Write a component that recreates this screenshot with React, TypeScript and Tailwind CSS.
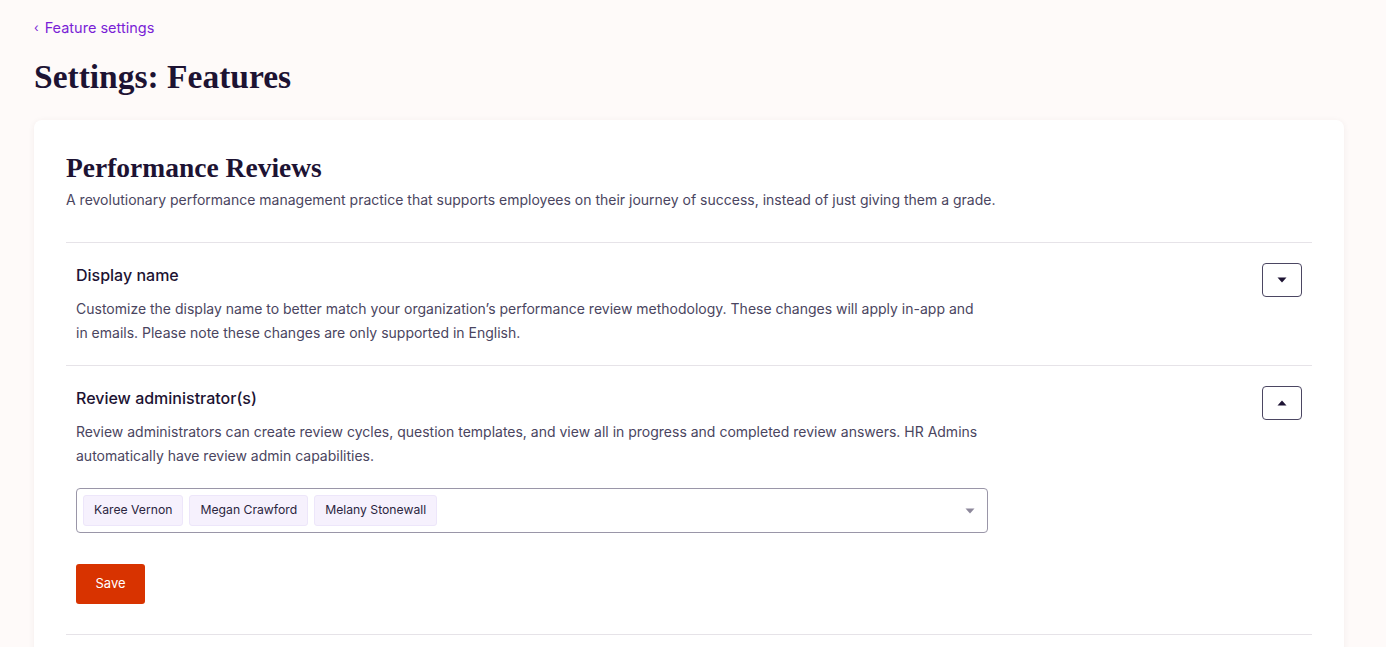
import { useState } from "react";

const serif = { fontFamily: '"Liberation Serif", "DejaVu Serif", serif' };

function ToggleButton({ open, onClick }: { open: boolean; onClick: () => void }) {
  return (
    <button
      onClick={onClick}
      className="flex h-[34px] w-[40px] shrink-0 items-center justify-center rounded-[4px] border border-[#4b4662] bg-white"
    >
      <svg width="10" height="6" viewBox="0 0 10 6" className={open ? "rotate-180" : ""}>
        <path d="M0.5 0.5 L9.5 0.5 L5 5.5 Z" fill="#1d1333" />
      </svg>
    </button>
  );
}

function Chip({ label }: { label: string }) {
  return (
    <span className="flex h-[31px] items-center rounded-[3px] border border-[#ede6fa] bg-[#f6f1fd] px-[10px] text-[12.2px] text-[#2b2540]">
      {label}
    </span>
  );
}

export default function App() {
  const [nameOpen, setNameOpen] = useState(false);
  const [adminOpen, setAdminOpen] = useState(true);

  return (
    <div
      className="min-h-screen bg-[#fefaf9] pl-[34px] pr-[42px] pt-[18px] text-[#1d1333]"
      style={{ fontFamily: 'Inter, "Noto Sans", sans-serif' }}
    >
      <a href="#" className="flex items-center gap-[6px] leading-[20px] text-[#7a1fd6]">
        <span className="text-[12px]">&lsaquo;</span>
        <span className="text-[14.5px]">Feature settings</span>
      </a>

      <h1 className="mt-[19px] text-[33.5px] font-bold leading-[40px] text-[#1d1333]" style={serif}>
        Settings: Features
      </h1>

      <div className="mt-[23px] rounded-[8px] bg-white px-[32px] pt-[31px] shadow-[0_1px_6px_rgba(60,30,30,0.06)]">
        <h2 className="text-[27.5px] font-bold leading-[34px] text-[#1d1333]" style={serif}>
          Performance Reviews
        </h2>
        <p className="mt-[4px] text-[14px] leading-[22px] text-[#4a4560]">
          A revolutionary performance management practice that supports employees on their journey of success, instead of just giving them a grade.
        </p>

        <div className="mt-[31px] border-t border-[#e6e3e8]">
          <section className="flex items-start justify-between px-[10px] pb-[20px] pt-[20px]">
            <div className="max-w-[912px]">
              <h3 className="text-[16px] font-medium leading-[24px] text-[#1d1333]">Display name</h3>
              <p className="mt-[10px] text-[14px] leading-[24px] text-[#4a4560]">
                Customize the display name to better match your organization’s performance review methodology. These changes will apply in-app and in emails. Please note these changes are only supported in English.
              </p>
            </div>
            <ToggleButton open={nameOpen} onClick={() => setNameOpen(!nameOpen)} />
          </section>
        </div>

        <div className="border-t border-[#e6e3e8]">
          <section className="px-[10px] pb-[30px] pt-[20px]">
            <div className="flex items-start justify-between">
              <div className="max-w-[912px]">
                <h3 className="text-[16px] font-medium leading-[24px] text-[#1d1333]">Review administrator(s)</h3>
                <p className="mt-[10px] text-[14px] leading-[24px] text-[#4a4560]">
                  Review administrators can create review cycles, question templates, and view all in progress and completed review answers. HR Admins automatically have review admin capabilities.
                </p>
              </div>
              <ToggleButton open={adminOpen} onClick={() => setAdminOpen(!adminOpen)} />
            </div>

            {adminOpen && (
              <>
                <div className="mt-[20px] flex h-[45px] w-[912px] items-center justify-between rounded-[4px] border border-[#9a96a8] pl-[6px] pr-[12px]">
                  <div className="flex gap-[6px]">
                    <Chip label="Karee Vernon" />
                    <Chip label="Megan Crawford" />
                    <Chip label="Melany Stonewall" />
                  </div>
                  <svg width="10" height="6" viewBox="0 0 10 6">
                    <path d="M0.5 0.5 L9.5 0.5 L5 5.5 Z" fill="#8d889b" />
                  </svg>
                </div>

                <button className="mt-[31px] h-[40px] w-[69px] rounded-[3px] bg-[#d83300] text-[13px] text-white">
                  Save
                </button>
              </>
            )}
          </section>
        </div>

        <div className="border-t border-[#e6e3e8] pb-[40px]" />
      </div>
    </div>
  );
}
